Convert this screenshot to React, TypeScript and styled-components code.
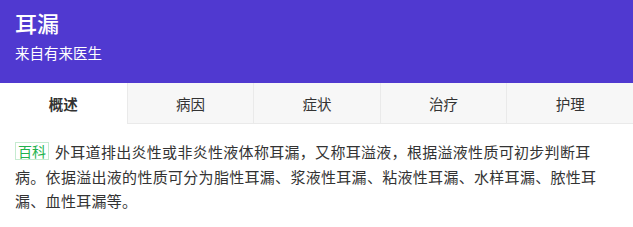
import React, { useState } from 'react';
import styled, { createGlobalStyle } from 'styled-components';

const GlobalStyle = createGlobalStyle`
  body {
    margin: 0;
    background: #fff;
    font-family: "Noto Sans CJK SC", "Noto Sans", sans-serif;
  }
`;

const Header = styled.header`
  background: #5039d0;
  color: #fff;
  padding: 6px 15px 0;
  height: 83px;
  box-sizing: border-box;
`;

const Title = styled.h1`
  margin: 0;
  font-size: 22px;
  font-weight: 500;
  line-height: 32px;
`;

const Subtitle = styled.div`
  margin-top: 4px;
  font-size: 14.5px;
  line-height: 22px;
`;

const TabBar = styled.nav`
  display: grid;
  grid-template-columns: repeat(5, 1fr);
  background: #f7f7f7;
`;

const Tab = styled.button<{ $active: boolean }>`
  height: 41px;
  border: none;
  border-left: 1px solid ${p => (p.$active ? 'transparent' : '#eaeaea')};
  border-bottom: 1px solid ${p => (p.$active ? 'transparent' : '#eaeaea')};
  background: ${p => (p.$active ? '#fff' : '#f7f7f7')};
  color: #333;
  font-family: inherit;
  font-size: 14.5px;
  font-weight: ${p => (p.$active ? 700 : 400)};
  padding: 0;
  cursor: pointer;
  &:first-child {
    border-left: none;
  }
`;

const Body = styled.p`
  margin: 0;
  padding: 16px 15px;
  font-size: 15px;
  letter-spacing: 0.3px;
  line-height: 24.5px;
  color: #333;
`;

const Badge = styled.span`
  display: inline-block;
  color: #22b24c;
  border: 1px solid #c6ebd0;
  font-size: 14px;
  letter-spacing: 0;
  line-height: 16px;
  padding: 0 2px;
  margin-right: 6px;
  vertical-align: 1px;
`;

const tabs = ['概述', '病因', '症状', '治疗', '护理'];

export default function App() {
  const [active, setActive] = useState(0);
  return (
    <>
      <GlobalStyle />
      <Header>
        <Title>耳漏</Title>
        <Subtitle>来自有来医生</Subtitle>
      </Header>
      <TabBar>
        {tabs.map((t, i) => (
          <Tab key={t} $active={i === active} onClick={() => setActive(i)}>
            {t}
          </Tab>
        ))}
      </TabBar>
      <Body>
        <Badge>百科</Badge>
        外耳道排出炎性或非炎性液体称耳漏，又称耳溢液，根据溢液性质可初步判断耳病。依据溢出液的性质可分为脂性耳漏、浆液性耳漏、粘液性耳漏、水样耳漏、脓性耳漏、血性耳漏等。
      </Body>
    </>
  );
}
